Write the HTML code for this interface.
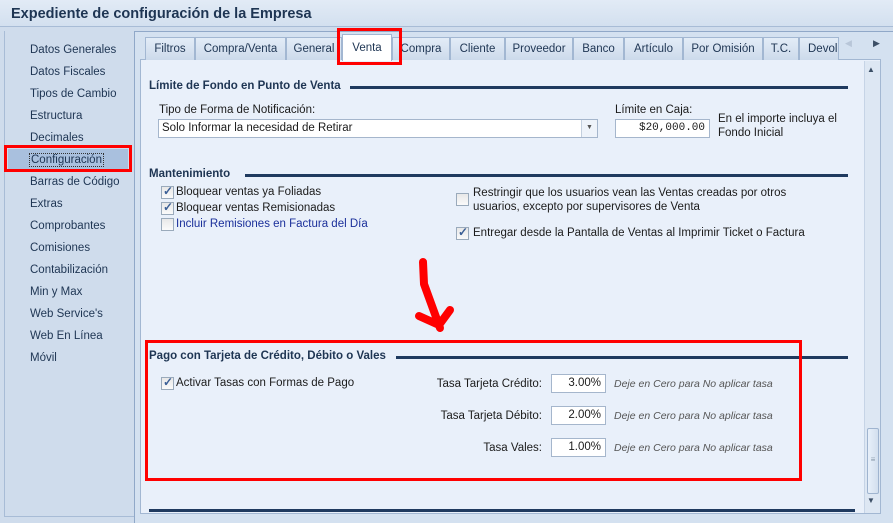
<!DOCTYPE html>
<html><head><meta charset="utf-8"><style>
*{margin:0;padding:0;box-sizing:border-box}
body{width:893px;height:523px;overflow:hidden;background:#cfdcec;font-family:"Liberation Sans",sans-serif;font-size:11.5px;color:#1b1b1b;position:relative}
.a{position:absolute;white-space:nowrap}
.title{left:0;top:0;width:893px;height:27px;background:linear-gradient(#e2ebf6,#d3e0ef);border-bottom:1px solid #a8bcd6;font-size:14.5px;font-weight:bold;color:#1e3553;padding:6px 0 0 11px}
.side{left:4px;top:31px;width:130px;height:486px;border-left:1px solid #a8bcd6;border-bottom:1px solid #a8bcd6}
.si{left:30px;font-size:11.5px;color:#1e3553}
.frame{left:134px;top:31px;width:759px;height:492px;border-left:1px solid #90a8c8;border-top:1px solid #90a8c8;background:#d4e1f0}
.tab{top:37px;height:23px;border:1px solid #a2b7d2;border-bottom:none;background:linear-gradient(#e3ecf7,#ccdaeb);color:#1e3553;text-align:center;padding-top:5px;font-size:11.5px}
.panel{left:140px;top:59px;width:741px;height:455px;background:#e9f0fa;border:1px solid #a2b7d2}
.hdr{font-weight:bold;color:#1e3553;font-size:11.5px}
.line{height:3px;background:#1f3a5f}
.cb{width:13px;height:13px;border:1px solid #9aaabb;background:linear-gradient(#e8e8e8,#fafafa)}
.cb.c::after{content:"✓";position:absolute;left:1px;top:-3px;font-size:12px;font-weight:bold;color:#3b5f96}
.inp{background:#fff;border:1px solid #a5b6cc;text-align:right;padding:2px 4px 0 0;height:19px}
.it{font-style:italic;color:#555;font-size:10.5px}
.red{border:3px solid #f00}
</style></head><body>
<div class="a title">Expediente de configuración de la Empresa</div>
<div class="a side"></div>
<div class="a si" style="top:44px">Datos Generales</div>
<div class="a si" style="top:66px">Datos Fiscales</div>
<div class="a si" style="top:88px">Tipos de Cambio</div>
<div class="a si" style="top:110px">Estructura</div>
<div class="a si" style="top:132px">Decimales</div>
<div class="a" style="left:8px;top:149px;width:120px;height:20px;background:#a9c0de"></div>
<div class="a si" style="top:153px;border:1px dotted #333;padding:0 1px;left:29px">Configuración</div>
<div class="a red" style="left:4px;top:145px;width:128px;height:27px"></div>
<div class="a si" style="top:176px">Barras de Código</div>
<div class="a si" style="top:198px">Extras</div>
<div class="a si" style="top:220px">Comprobantes</div>
<div class="a si" style="top:242px">Comisiones</div>
<div class="a si" style="top:264px">Contabilización</div>
<div class="a si" style="top:286px">Min y Max</div>
<div class="a si" style="top:308px">Web Service's</div>
<div class="a si" style="top:330px">Web En Línea</div>
<div class="a si" style="top:352px">Móvil</div>

<div class="a frame"></div>
<div class="a panel"></div>
<div class="a tab" style="left:145px;width:50px">Filtros</div>
<div class="a tab" style="left:195px;width:91px">Compra/Venta</div>
<div class="a tab" style="left:286px;width:56px">General</div>
<div class="a tab" style="left:392px;width:58px">Compra</div>
<div class="a tab" style="left:450px;width:55px">Cliente</div>
<div class="a tab" style="left:505px;width:68px">Proveedor</div>
<div class="a tab" style="left:573px;width:51px">Banco</div>
<div class="a tab" style="left:624px;width:59px">Artículo</div>
<div class="a tab" style="left:683px;width:80px">Por Omisión</div>
<div class="a tab" style="left:763px;width:36px">T.C.</div>
<div class="a tab" style="left:799px;width:40px;overflow:hidden;text-align:left;padding-left:8px">Devolu</div>
<div class="a tab" style="left:342px;top:34px;width:50px;height:27px;background:#fff;padding-top:7px">Venta</div>
<div class="a" style="left:845px;top:38px;color:#b8c6d8;font-size:9px">◀</div>
<div class="a" style="left:873px;top:38px;color:#3c4f66;font-size:9px">▶</div>
<div class="a red" style="left:337px;top:28px;width:65px;height:37px"></div>

<div class="a" style="left:864px;top:61px;width:16px;height:452px;background:#dde7f3;border-left:1px solid #c6d4e6"></div>
<div class="a" style="left:867px;top:65px;font-size:8px;color:#3c4f66">▲</div>
<div class="a" style="left:867px;top:428px;width:12px;height:66px;border:1px solid #9fb4cf;border-radius:2px;background:linear-gradient(90deg,#e8f0fa,#d2dfee);color:#8899aa;font-size:8px;text-align:center;padding-top:26px">≡</div>
<div class="a" style="left:867px;top:496px;font-size:8px;color:#3c4f66">▼</div>

<div class="a hdr" style="left:149px;top:80px">Límite de Fondo en Punto de Venta</div>
<div class="a line" style="left:350px;top:86px;width:498px"></div>
<div class="a" style="left:159px;top:104px">Tipo de Forma de Notificación:</div>
<div class="a inp" style="left:158px;top:119px;width:440px;text-align:left;padding-left:3px">Solo Informar la necesidad de Retirar</div>
<div class="a" style="left:581px;top:120px;width:16px;height:17px;border-left:1px solid #c3cfde;background:#eef3fa;font-size:7px;color:#555;text-align:center;padding-top:4px">▼</div>
<div class="a" style="left:615px;top:104px">Límite en Caja:</div>
<div class="a inp" style="left:615px;top:119px;width:95px;font-family:'Liberation Mono',monospace;font-size:11px">$20,000.00</div>
<div class="a" style="left:718px;top:112px;line-height:14px">En el importe incluya el<br>Fondo Inicial</div>

<div class="a hdr" style="left:149px;top:168px">Mantenimiento</div>
<div class="a line" style="left:245px;top:174px;width:603px"></div>
<div class="a cb c" style="left:161px;top:186px"></div><div class="a" style="left:176px;top:186px">Bloquear ventas ya Foliadas</div>
<div class="a cb c" style="left:161px;top:202px"></div><div class="a" style="left:176px;top:202px">Bloquear ventas Remisionadas</div>
<div class="a cb" style="left:161px;top:218px"></div><div class="a" style="left:176px;top:218px;color:#1a2f9a">Incluir Remisiones en Factura del Día</div>
<div class="a cb" style="left:456px;top:193px"></div><div class="a" style="left:473px;top:186px;line-height:14px">Restringir que los usuarios vean las Ventas creadas por otros<br>usuarios, excepto por supervisores de Venta</div>
<div class="a cb c" style="left:456px;top:227px"></div><div class="a" style="left:473px;top:227px">Entregar desde la Pantalla de Ventas al Imprimir Ticket o Factura</div>

<svg class="a" style="left:410px;top:250px" width="60" height="90"><path d="M13 12 L14 34 Q22 56 30 78 M9 66 L29 75 L40 60" fill="none" stroke="#f00" stroke-width="8" stroke-linecap="round" stroke-linejoin="round"/></svg>

<div class="a hdr" style="left:149px;top:350px">Pago con Tarjeta de Crédito, Débito o Vales</div>
<div class="a line" style="left:396px;top:356px;width:452px"></div>
<div class="a cb c" style="left:161px;top:377px"></div><div class="a" style="left:176px;top:377px">Activar Tasas con Formas de Pago</div>
<div class="a" style="left:380px;top:378px;width:162px;text-align:right">Tasa Tarjeta Crédito:</div>
<div class="a inp" style="left:551px;top:374px;width:55px">3.00%</div>
<div class="a it" style="left:614px;top:378px">Deje en Cero para No aplicar tasa</div>
<div class="a" style="left:380px;top:410px;width:162px;text-align:right">Tasa Tarjeta Débito:</div>
<div class="a inp" style="left:551px;top:406px;width:55px">2.00%</div>
<div class="a it" style="left:614px;top:410px">Deje en Cero para No aplicar tasa</div>
<div class="a" style="left:380px;top:442px;width:162px;text-align:right">Tasa Vales:</div>
<div class="a inp" style="left:551px;top:438px;width:55px">1.00%</div>
<div class="a it" style="left:614px;top:442px">Deje en Cero para No aplicar tasa</div>
<div class="a red" style="left:145px;top:340px;width:657px;height:141px"></div>
<div class="a line" style="left:149px;top:509px;width:706px"></div>
</body></html>
